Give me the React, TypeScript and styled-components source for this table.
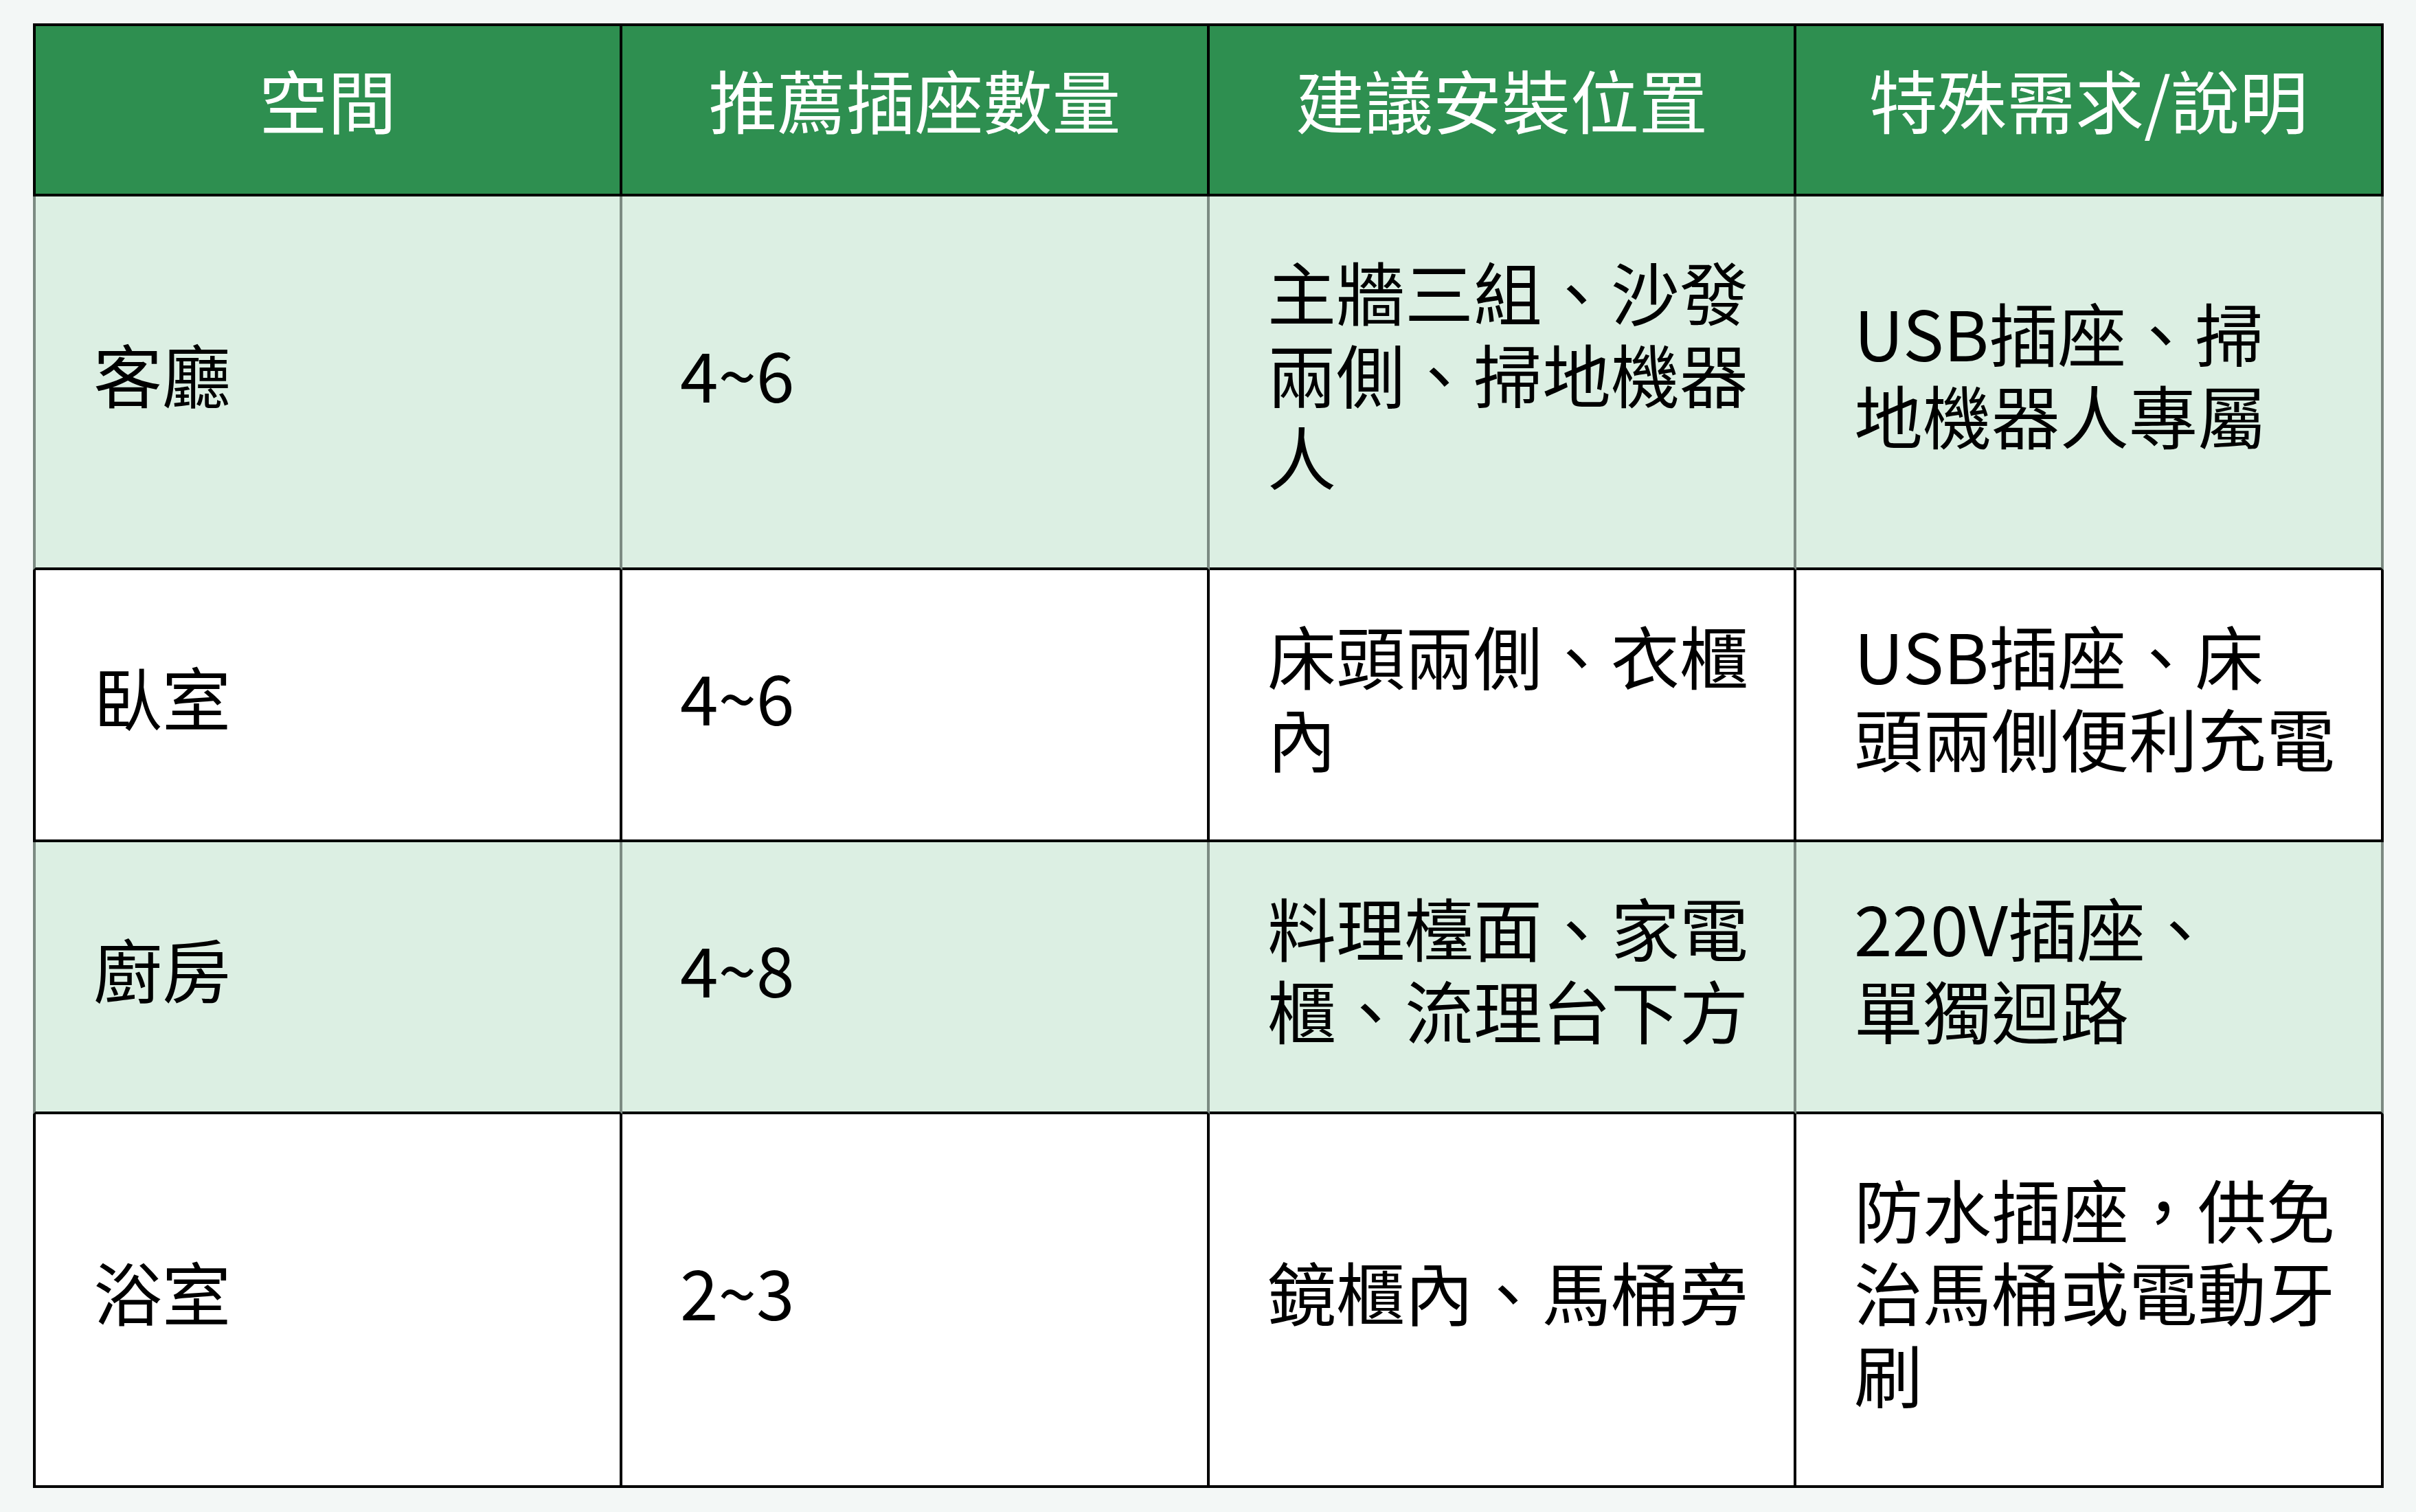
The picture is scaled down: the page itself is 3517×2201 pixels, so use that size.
import React from "react"
import styled, { createGlobalStyle } from "styled-components"

const GlobalStyle = createGlobalStyle`
  html, body {
    margin: 0;
    padding: 0;
    background: #f3f7f6;
  }

  body {
    font-family: "Noto Sans CJK TC", "Noto Sans", sans-serif;
  }
`

const Page = styled.div`
  min-height: 100vh;
  padding: 34px 47px 35px 48px;
  box-sizing: border-box;
`

const Table = styled.div`
  display: flex;
  flex-direction: column;
  width: 3422px;
  border-top: 4px solid #000;
`

const Row = styled.div<{ $height: number; $tint?: boolean; $head?: boolean }>`
  display: grid;
  grid-template-columns: 858px 855px 854px 855px;
  height: ${(props) => props.$height}px;
  background: ${(props) =>
    props.$head ? "#2e8f50" : props.$tint ? "#dcefe3" : "#ffffff"};
`

const Cell = styled.div<{ $tint?: boolean; $first?: boolean }>`
  box-sizing: border-box;
  display: flex;
  align-items: center;
  padding: 0 0 26px 84px;
  font-size: 100px;
  line-height: 120px;
  font-weight: 400;
  color: #000;
  white-space: nowrap;
  border-right: 4px solid ${(props) => (props.$tint ? "#7c8a82" : "#000")};
  border-left: ${(props) =>
    props.$first ? `4px solid ${props.$tint ? "#7c8a82" : "#000"}` : "none"};
  border-bottom: 4px solid #000;
`

const HeadCell = styled(Cell)`
  justify-content: center;
  padding: 0 0 32px 0;
  color: #ffffff;
`

type Entry = {
  space: string
  count: string
  place: string[]
  note: string[]
  tint: boolean
  height: number
}

const headings = ["空間", "推薦插座數量", "建議安裝位置", "特殊需求/說明"]

const entries: Entry[] = [
  {
    space: "客廳",
    count: "4~6",
    place: ["主牆三組、沙發", "兩側、掃地機器", "人"],
    note: ["USB插座、掃", "地機器人專屬"],
    tint: true,
    height: 544,
  },
  {
    space: "臥室",
    count: "4~6",
    place: ["床頭兩側、衣櫃", "內"],
    note: ["USB插座、床", "頭兩側便利充電"],
    tint: false,
    height: 396,
  },
  {
    space: "廚房",
    count: "4~8",
    place: ["料理檯面、家電", "櫃、流理台下方"],
    note: ["220V插座、", "單獨迴路"],
    tint: true,
    height: 396,
  },
  {
    space: "浴室",
    count: "2~3",
    place: ["鏡櫃內、馬桶旁"],
    note: ["防水插座，供免", "治馬桶或電動牙", "刷"],
    tint: false,
    height: 544,
  },
]

const Lines: React.FC<{ lines: string[] }> = ({ lines }) => (
  <span>
    {lines.map((line, i) => (
      <React.Fragment key={i}>
        {i > 0 && <br />}
        {line}
      </React.Fragment>
    ))}
  </span>
)

const App: React.FC = () => {
  return (
    <Page>
      <GlobalStyle />
      <Table>
        <Row $height={248} $head>
          {headings.map((h, i) => (
            <HeadCell key={h} $first={i === 0}>
              {h}
            </HeadCell>
          ))}
        </Row>
        {entries.map((e) => (
          <Row key={e.space} $height={e.height} $tint={e.tint}>
            <Cell $first $tint={e.tint}>
              {e.space}
            </Cell>
            <Cell $tint={e.tint}>{e.count}</Cell>
            <Cell $tint={e.tint}>
              <Lines lines={e.place} />
            </Cell>
            <Cell $tint={e.tint}>
              <Lines lines={e.note} />
            </Cell>
          </Row>
        ))}
      </Table>
    </Page>
  )
}

export default App
